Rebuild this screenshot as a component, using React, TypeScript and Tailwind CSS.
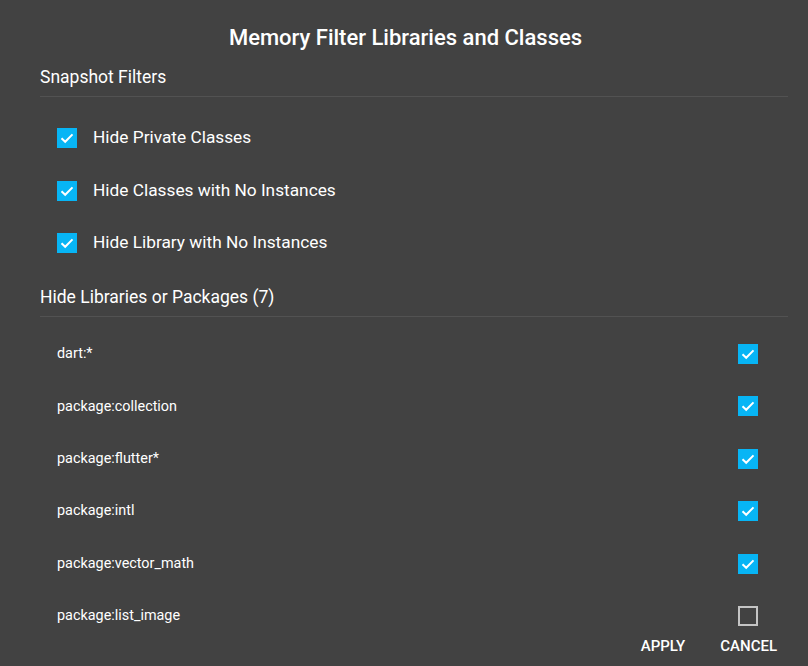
import { useState } from "react";

const FILTERS = [
  "Hide Private Classes",
  "Hide Classes with No Instances",
  "Hide Library with No Instances",
];

const LIBRARIES = [
  { name: "dart:*", checked: true },
  { name: "package:collection", checked: true },
  { name: "package:flutter*", checked: true },
  { name: "package:intl", checked: true },
  { name: "package:vector_math", checked: true },
  { name: "package:list_image", checked: false },
];

function CheckBox({ checked, onClick }: { checked: boolean; onClick: () => void }) {
  if (!checked) {
    return (
      <div
        className="w-5 h-5 border-2 border-[#c4c4c4] cursor-pointer shrink-0"
        onClick={onClick}
      />
    );
  }
  return (
    <div
      className="w-5 h-5 bg-[#07b5f5] flex items-center justify-center cursor-pointer shrink-0"
      onClick={onClick}
    >
      <svg width="20" height="20" viewBox="0 0 20 20">
        <path
          d="M4.5 10.2 L8.2 13.8 L15.5 6.4"
          fill="none"
          stroke="white"
          strokeWidth="2"
        />
      </svg>
    </div>
  );
}

export default function App() {
  const [filters, setFilters] = useState<boolean[]>([true, true, true]);
  const [libs, setLibs] = useState(LIBRARIES);

  return (
    <div
      className="w-[808px] h-[666px] bg-[#424242] text-white flex flex-col overflow-hidden"
      style={{ fontFamily: "Roboto, sans-serif" }}
    >
      <h1 className="mt-6 text-[22px] leading-7 font-medium text-center pl-[3px]">
        Memory Filter Libraries and Classes
      </h1>

      {/* Snapshot filters */}
      <div className="mt-[13px] pl-10 pr-5">
        <h2 className="text-[17.5px] leading-6">Snapshot Filters</h2>
        <div className="mt-[7px] h-px bg-[#525252]" />
      </div>
      <div className="mt-[31px] pl-[57px] flex flex-col gap-[32.5px]">
        {FILTERS.map((label, i) => (
          <div key={label} className="flex flex-row items-center h-5 gap-[16px]">
            <CheckBox
              checked={filters[i]}
              onClick={() =>
                setFilters((prev) => prev.map((v, j) => (j === i ? !v : v)))
              }
            />
            <span className="text-[17.3px]">{label}</span>
          </div>
        ))}
      </div>

      {/* Libraries */}
      <div className="mt-[32px] pl-10 pr-5">
        <h2 className="text-[17.5px] leading-6">
          Hide Libraries or Packages ({libs.length + 1})
        </h2>
        <div className="mt-[7px] h-px bg-[#525252]" />
      </div>
      <div className="mt-[27px] pl-[57px] pr-[50px] flex flex-col gap-[32.4px]">
        {libs.map((lib, i) => (
          <div key={lib.name} className="flex flex-row items-center justify-between h-5">
            <span className="text-[14.4px]">{lib.name}</span>
            <CheckBox
              checked={lib.checked}
              onClick={() =>
                setLibs((prev) =>
                  prev.map((l, j) => (j === i ? { ...l, checked: !l.checked } : l))
                )
              }
            />
          </div>
        ))}
      </div>

      <div className="mt-[10px] flex flex-row justify-end gap-[35px] pr-[31px]">
        <button className="text-[15px] leading-5 font-medium uppercase">Apply</button>
        <button className="text-[15px] leading-5 font-medium uppercase">Cancel</button>
      </div>
    </div>
  );
}
